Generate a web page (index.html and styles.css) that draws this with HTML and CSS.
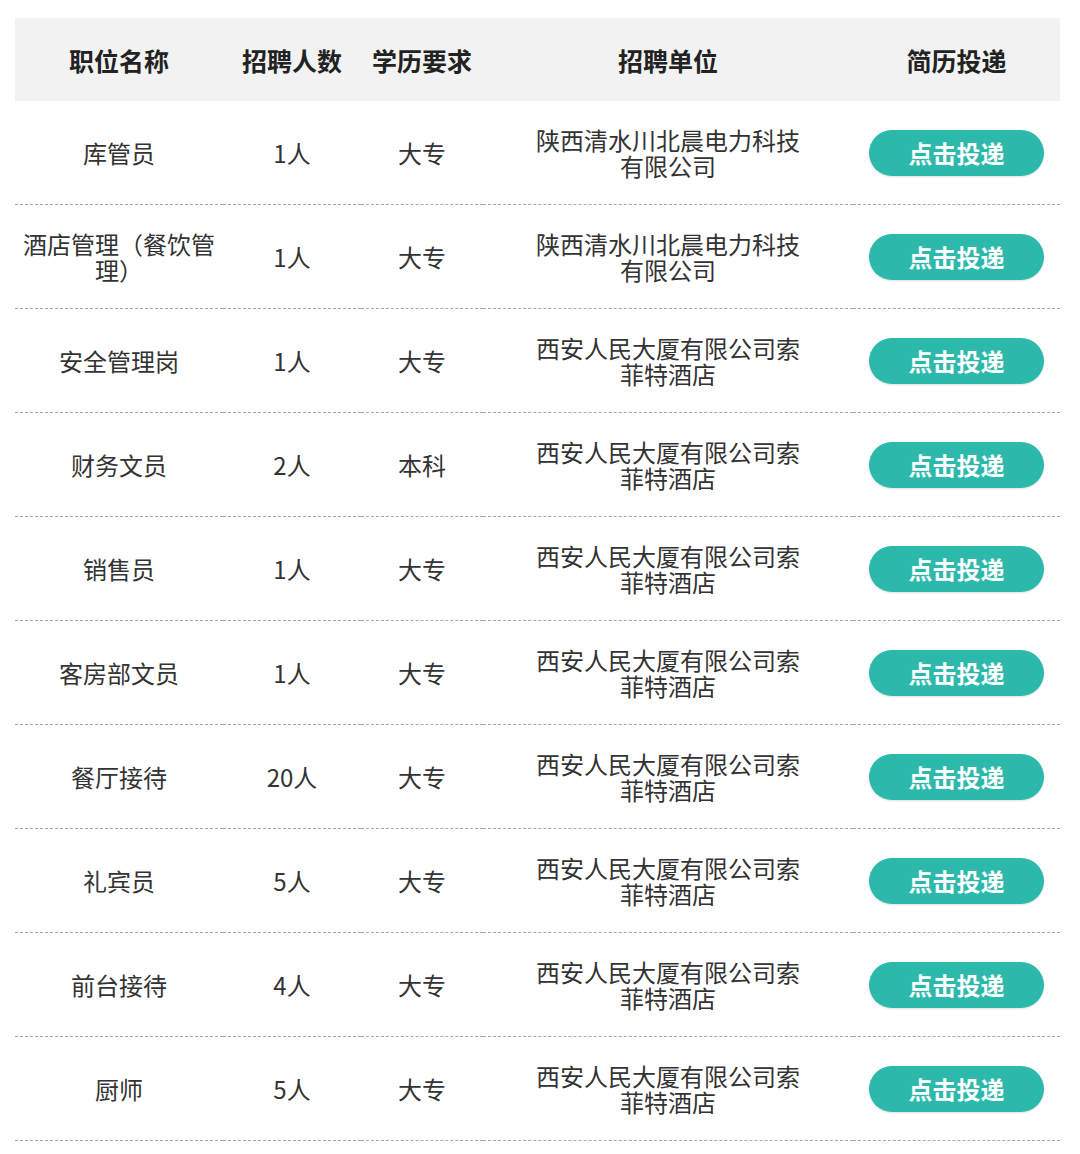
FILE: index.html
```html
<!DOCTYPE html>
<html lang="zh-CN">
<head>
<meta charset="utf-8">
<title>招聘岗位</title>
<link rel="stylesheet" href="styles.css">
</head>
<body>
<div class="page">
<table class="jobs">
  <colgroup>
    <col class="c1"><col class="c2"><col class="c3"><col class="c4"><col class="c5">
  </colgroup>
  <thead>
    <tr><th>职位名称</th><th>招聘人数</th><th>学历要求</th><th>招聘单位</th><th>简历投递</th></tr>
  </thead>
  <tbody>
    <tr><td class="name">库管员</td><td>1人</td><td>大专</td><td class="org">陕西清水川北晨电力科技有限公司</td><td><a class="btn">点击投递</a></td></tr>
    <tr><td class="name">酒店管理（餐饮管理）</td><td>1人</td><td>大专</td><td class="org">陕西清水川北晨电力科技有限公司</td><td><a class="btn">点击投递</a></td></tr>
    <tr><td class="name">安全管理岗</td><td>1人</td><td>大专</td><td class="org">西安人民大厦有限公司索菲特酒店</td><td><a class="btn">点击投递</a></td></tr>
    <tr><td class="name">财务文员</td><td>2人</td><td>本科</td><td class="org">西安人民大厦有限公司索菲特酒店</td><td><a class="btn">点击投递</a></td></tr>
    <tr><td class="name">销售员</td><td>1人</td><td>大专</td><td class="org">西安人民大厦有限公司索菲特酒店</td><td><a class="btn">点击投递</a></td></tr>
    <tr><td class="name">客房部文员</td><td>1人</td><td>大专</td><td class="org">西安人民大厦有限公司索菲特酒店</td><td><a class="btn">点击投递</a></td></tr>
    <tr><td class="name">餐厅接待</td><td>20人</td><td>大专</td><td class="org">西安人民大厦有限公司索菲特酒店</td><td><a class="btn">点击投递</a></td></tr>
    <tr><td class="name">礼宾员</td><td>5人</td><td>大专</td><td class="org">西安人民大厦有限公司索菲特酒店</td><td><a class="btn">点击投递</a></td></tr>
    <tr><td class="name">前台接待</td><td>4人</td><td>大专</td><td class="org">西安人民大厦有限公司索菲特酒店</td><td><a class="btn">点击投递</a></td></tr>
    <tr><td class="name">厨师</td><td>5人</td><td>大专</td><td class="org">西安人民大厦有限公司索菲特酒店</td><td><a class="btn">点击投递</a></td></tr>
  </tbody>
</table>
</div>
</body>
</html>
```

FILE: styles.css
```css
html, body {
  margin: 0;
  padding: 0;
  background: #ffffff;
}
body {
  font-family: "Noto Sans CJK SC", "Microsoft YaHei", "Noto Sans", sans-serif;
  color: #333333;
}
.page {
  padding: 18px 20px 0 15px;
}
.jobs {
  width: 1045px;
  border-collapse: collapse;
  table-layout: fixed;
}
.c1 { width: 208px; }
.c2 { width: 138px; }
.c3 { width: 122px; }
.c4 { width: 370px; }
.c5 { width: 207px; }

.jobs th {
  background: #f2f2f2;
  height: 83px;
  padding: 0;
  font-size: 25px;
  font-weight: 700;
  color: #222222;
  text-align: center;
  vertical-align: middle;
  line-height: 26px;
}
.jobs td {
  height: 103px;
  padding: 0;
  font-size: 24px;
  line-height: 26px;
  text-align: center;
  vertical-align: middle;
  border-bottom: 1px dashed #a8a8a8;
  color: #333333;
}
.jobs td.name {
  padding: 0 6px;
}
.jobs td.org {
  padding: 0 45px;
}
.btn {
  display: inline-flex;
  align-items: center;
  justify-content: center;
  width: 175px;
  height: 46px;
  border-radius: 23px;
  background: #2cb9ab;
  color: #ffffff;
  font-size: 24px;
  font-weight: 700;
  text-decoration: none;
  box-shadow: 0 1px 2px rgba(0, 0, 0, 0.12);
}
```
